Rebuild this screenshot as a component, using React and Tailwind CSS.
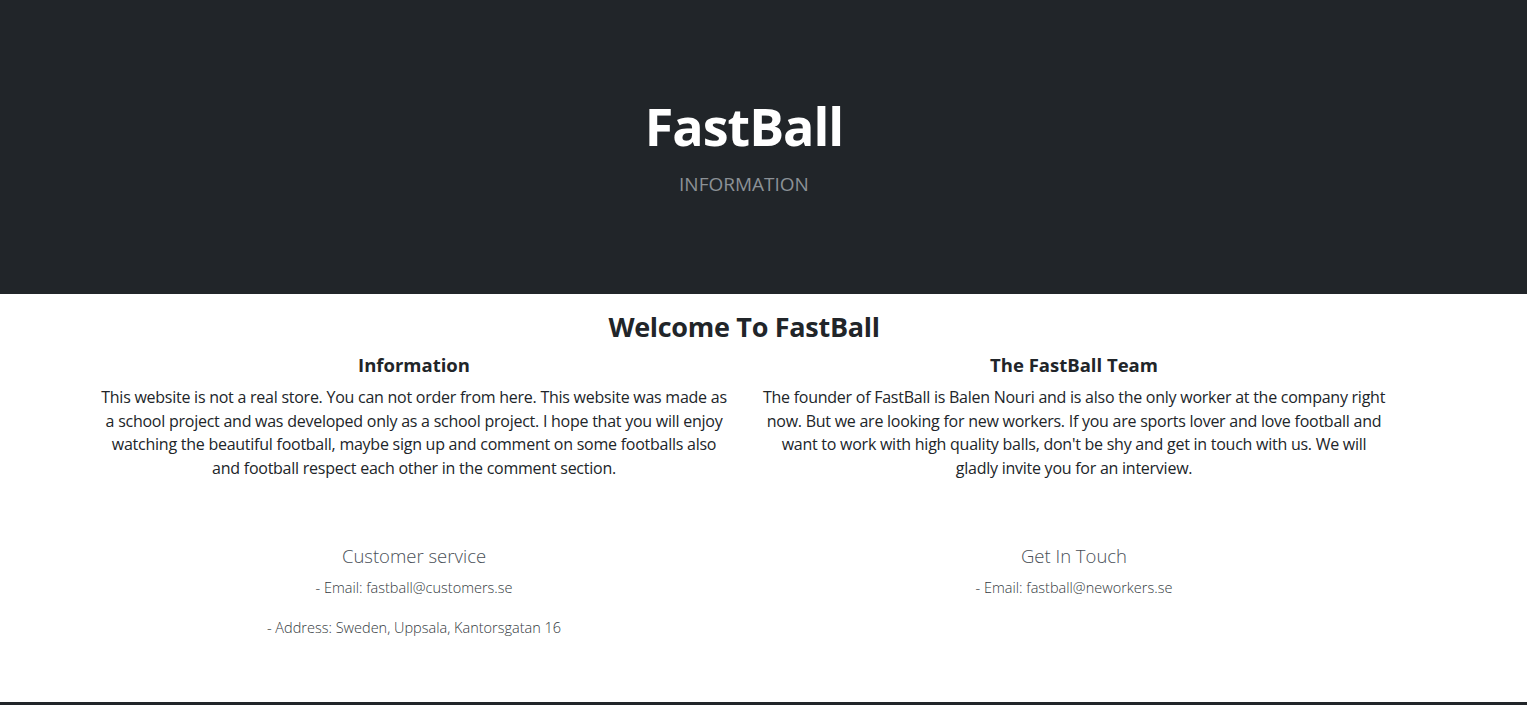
export default function App() {
  const font = { fontFamily: '"Open Sans", "Noto Sans", sans-serif' };
  return (
    <div className="min-h-[705px] bg-white text-[#212529]" style={font}>
      <header className="h-[294px] bg-[#212529] flex flex-col items-center justify-center">
        <div className="w-[1488px] mr-auto flex flex-col items-center -mt-[1px]">
          <h1 className="text-[52px] leading-[60px] font-bold text-white tracking-[-1px]">FastBall</h1>
          <p className="text-[19px] leading-[28px] text-[#8c9196] mt-[14px]">INFORMATION</p>
        </div>
      </header>
      <main className="w-[1320px] ml-[84px] pt-[15px] text-center">
        <h2 className="text-[27px] leading-[36px] font-bold mb-[8px] tracking-[-0.3px]">Welcome To FastBall</h2>
        <div className="grid grid-cols-2">
          <div className="px-[12px]">
            <h4 className="text-[18.5px] leading-[24px] font-bold mb-[8px]">Information</h4>
            <p className="text-[16px] leading-[23.7px] font-medium tracking-[-0.25px] pt-[1px]">
              This website is not a real store. You can not order from here. This website was made as<br />
              a school project and was developed only as a school project. I hope that you will enjoy<br />
              watching the beautiful football, maybe sign up and comment on some footballs also<br />
              and football respect each other in the comment section.
            </p>
          </div>
          <div className="px-[12px]">
            <h4 className="text-[18.5px] leading-[24px] font-bold mb-[8px]">The FastBall Team</h4>
            <p className="text-[16px] leading-[23.7px] font-medium tracking-[-0.25px] pt-[1px]">
              The founder of FastBall is Balen Nouri and is also the only worker at the company right<br />
              now. But we are looking for new workers. If you are sports lover and love football and<br />
              want to work with high quality balls, don't be shy and get in touch with us. We will<br />
              gladly invite you for an interview.
            </p>
          </div>
        </div>
        <div className="grid grid-cols-2 mt-[63px] text-[#343a40]">
          <div className="px-[12px]">
            <h5 className="text-[18.5px] leading-[24px] font-light mb-[8px] text-[#495057]">Customer service</h5>
            <p className="text-[14.5px] leading-[24px] font-light mt-[4px]">- Email: fastball@customers.se</p>
            <p className="text-[14.5px] leading-[24px] font-light mt-[16px]">- Address: Sweden, Uppsala, Kantorsgatan 16</p>
          </div>
          <div className="px-[12px]">
            <h5 className="text-[18.5px] leading-[24px] font-light mb-[8px] text-[#495057]">Get In Touch</h5>
            <p className="text-[14.5px] leading-[24px] font-light mt-[4px]">- Email: fastball@neworkers.se</p>
          </div>
        </div>
      </main>
      <footer className="mt-[62px] h-[40px] bg-[#212529]"></footer>
    </div>
  );
}
